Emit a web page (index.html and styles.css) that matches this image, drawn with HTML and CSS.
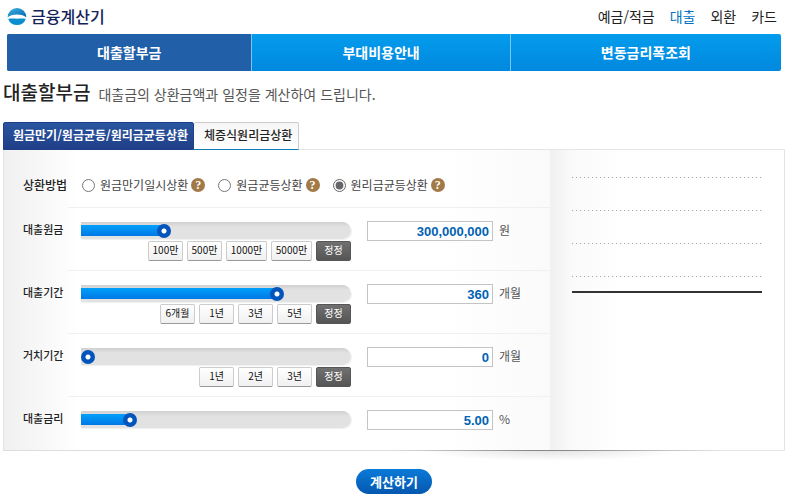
FILE: index.html
```html
<!DOCTYPE html>
<html lang="ko">
<head>
  <meta charset="UTF-8">
  <meta name="viewport" content="width=device-width, initial-scale=1">
  <title>금융계산기</title>
  <link rel="stylesheet" href="styles.css">
</head>
<body>

  <header class="header">
    <a href="#" class="logo">
      <svg width="20" height="20" viewBox="0 0 20 20" aria-hidden="true">
        <defs>
          <linearGradient id="sky" x1="0" y1="0" x2="1" y2="1">
            <stop offset="0" stop-color="#3fb4e0"/>
            <stop offset="1" stop-color="#0065b3"/>
          </linearGradient>
        </defs>
        <path d="M0.6 11.5A9.4 9.4 0 1 1 19.4 11.5C17.5 9.6 14 8.4 10 8.4S2.5 9.6 0.6 11.5Z" fill="url(#sky)"/>
        <path d="M1.2 13C4 12.2 7 12.8 10 12.8S16 12.2 18.8 13A9.4 9.4 0 0 1 1.2 13Z" fill="#0b8ed0"/>
      </svg>
      <span>금융계산기</span>
    </a>
    <nav class="menu">
      <a href="#">예금/적금</a>
      <a href="#" class="on">대출</a>
      <a href="#">외환</a>
      <a href="#">카드</a>
    </nav>
  </header>

  <nav class="nav">
    <a href="#" class="on">대출할부금</a>
    <a href="#">부대비용안내</a>
    <a href="#">변동금리폭조회</a>
  </nav>

  <div class="title">
    <h1>대출할부금</h1>
    <p>대출금의 상환금액과 일정을 계산하여 드립니다.</p>
  </div>

  <div class="tabs">
    <button type="button" class="tab on">원금만기/원금균등/원리금균등상환</button>
    <button type="button" class="tab">체증식원리금상환</button>
  </div>

  <form>
    <div class="panel">
      <div class="fields">
        <div class="row method">
          <span class="label">상환방법</span>
          <div class="cell">
            <div class="radio">
              <input type="radio" name="method" id="method1">
              <label for="method1">원금만기일시상환</label>
              <button type="button" class="help">?</button>
            </div>
            <div class="radio">
              <input type="radio" name="method" id="method2">
              <label for="method2">원금균등상환</label>
              <button type="button" class="help">?</button>
            </div>
            <div class="radio">
              <input type="radio" name="method" id="method3" checked>
              <label for="method3">원리금균등상환</label>
              <button type="button" class="help">?</button>
            </div>
          </div>
        </div>

        <div class="row">
          <label class="label" for="amount">대출원금</label>
          <div class="cell">
            <div class="control">
              <div class="track"><input type="range" aria-label="대출원금" min="0" max="1000000000" value="300000000" style="--fill: 30%"></div>
              <div class="steps">
                <button type="button">100만</button>
                <button type="button">500만</button>
                <button type="button" class="wide">1000만</button>
                <button type="button" class="wide">5000만</button>
                <button type="button" class="reset">정정</button>
              </div>
            </div>
            <input type="text" class="value" id="amount" value="300,000,000">
            <span class="unit">원</span>
          </div>
        </div>

        <div class="row">
          <label class="label" for="period">대출기간</label>
          <div class="cell">
            <div class="control">
              <div class="track"><input type="range" aria-label="대출기간" min="0" max="480" value="360" style="--fill: 75%"></div>
              <div class="steps">
                <button type="button">6개월</button>
                <button type="button">1년</button>
                <button type="button">3년</button>
                <button type="button">5년</button>
                <button type="button" class="reset">정정</button>
              </div>
            </div>
            <input type="text" class="value" id="period" value="360">
            <span class="unit">개월</span>
          </div>
        </div>

        <div class="row">
          <label class="label" for="grace">거치기간</label>
          <div class="cell">
            <div class="control">
              <div class="track"><input type="range" aria-label="거치기간" min="0" max="120" value="0" style="--fill: 0%"></div>
              <div class="steps">
                <button type="button">1년</button>
                <button type="button">2년</button>
                <button type="button">3년</button>
                <button type="button" class="reset">정정</button>
              </div>
            </div>
            <input type="text" class="value" id="grace" value="0">
            <span class="unit">개월</span>
          </div>
        </div>

        <div class="row">
          <label class="label" for="rate">대출금리</label>
          <div class="cell">
            <div class="control">
              <div class="track"><input type="range" aria-label="대출금리" min="0" max="30" value="5" style="--fill: 17%"></div>
            </div>
            <input type="text" class="value" id="rate" value="5.00">
            <span class="unit">%</span>
          </div>
        </div>
      </div>

      <div class="result">
        <ul>
          <li></li>
          <li></li>
          <li></li>
          <li></li>
        </ul>
      </div>
    </div>
    <div class="shadow"></div>

    <div class="submit">
      <button type="submit">계산하기</button>
    </div>
  </form>

</body>
</html>
```

FILE: styles.css
```css
* {
  box-sizing: border-box;
}

body {
  margin: 0;
  padding: 0 15px 0 3px;
  background: #fff;
  color: #333;
  font-family: "Noto Sans CJK KR", "Noto Sans", sans-serif;
  font-size: 12px;
  line-height: 18px;
}

a {
  color: inherit;
  text-decoration: none;
}

button, input {
  margin: 0;
  font-family: inherit;
}

button {
  padding: 0;
  border: 0;
  cursor: pointer;
}

/* header */
.header {
  display: flex;
  justify-content: space-between;
  align-items: center;
  height: 34px;
  padding: 0 8px 2px 4px;
}

.logo {
  display: flex;
  align-items: center;
  gap: 4px;
  color: #14235a;
  font-size: 16px;
  font-weight: 500;
}

.menu {
  display: flex;
  gap: 15px;
  color: #222;
  font-size: 14px;
}

.menu .on {
  color: #0070c0;
}

.nav {
  display: flex;
  margin: 0 4px;
  border-radius: 2px;
  overflow: hidden;
  background: linear-gradient(#049cec, #0088df);
}

.nav a {
  flex: 1 1 auto;
  color: #fff;
  font-size: 14px;
  font-weight: bold;
  line-height: 37px;
  text-align: center;
}

.nav a + a {
  border-left: 1px solid #7cc6f2;
}

.nav .on {
  background: #2160a8;
}

.title {
  display: flex;
  align-items: baseline;
  gap: 8px;
  padding: 9px 0 18px;
}

.title h1 {
  margin: 0;
  color: #222;
  font-size: 19px;
  font-weight: 500;
  line-height: 24px;
}

.title p {
  margin: 0;
  color: #555;
  font-size: 14px;
}

/* tabs */
.tabs {
  display: flex;
  position: relative;
}

.tab {
  height: 28px;
  padding: 0 6px 3px 10px;
  border: 1px solid #ccc;
  border-left: 0;
  border-bottom-color: #0b7bb5;
  border-radius: 2px 2px 0 0;
  background: linear-gradient(#f6f6f6, #fff);
  color: #222;
  font-size: 12px;
  font-weight: 500;
}

.tab.on {
  padding: 0 5px 3px 9px;
  border: 1px solid #1f3f86;
  background: linear-gradient(#2a55a0, #1f3f88);
  color: #fff;
  font-weight: bold;
}

/* panel */
.panel {
  display: flex;
  margin-top: -1px;
  border: 1px solid #e4e4e4;
  border-bottom: 0;
}

.fields {
  flex: 1;
  padding-bottom: 1px;
  background: linear-gradient(to right, #f0f0f0, #fff 74px, #fff 440px, #fafafa);
}

.row {
  display: flex;
  height: 63px;
  padding-left: 19px;
}

.label {
  width: 45px;
  padding-top: 12px;
  color: #222;
  font-size: 11px;
  font-weight: 500;
  white-space: nowrap;
}

.cell {
  flex: 1;
  display: flex;
  align-items: flex-start;
  padding: 14px 0 0 13px;
  border-bottom: 1px solid #f0f0f0;
}

.row:last-child {
  height: 52px;
}

.row:last-child .cell {
  border-bottom: 0;
}

.row.method {
  height: 58px;
}

.method .label {
  padding-top: 26px;
  font-size: 12px;
}

.method .cell {
  gap: 12px;
  padding-top: 26px;
}

.radio {
  display: flex;
  align-items: center;
  color: #444;
}

.radio input {
  width: 13px;
  height: 13px;
  margin: 0 5px 0 1px;
  accent-color: #666;
}

.help {
  width: 14px;
  height: 14px;
  margin-left: 3px;
  border-radius: 50%;
  background: #a17a48;
  color: #fff;
  font: bold 12px/14px "Liberation Serif", serif;
}

.control {
  width: 270px;
  margin-right: 16px;
}

.track {
  height: 17px;
  padding-right: 4px;
  border-radius: 0 9px 9px 0;
  background: linear-gradient(#d0d0d0, #e2e2e2 5px, #e2e2e2);
  box-shadow: 1px 1px 1px #f0f0f0;
}

.track input {
  display: block;
  width: 100%;
  height: 17px;
  -webkit-appearance: none;
  appearance: none;
  background: linear-gradient(#00a0fa, #0078e6) 0 3px / var(--fill) 11px no-repeat;
}

.track input::-webkit-slider-thumb {
  -webkit-appearance: none;
  width: 14px;
  height: 14px;
  border-radius: 50%;
  background: radial-gradient(circle, #fff 2px, #0354bb 3px);
}

.steps {
  display: flex;
  justify-content: flex-end;
  gap: 4px;
  margin-top: 2px;
}

.steps button {
  width: 35px;
  height: 20px;
  padding-bottom: 2px;
  border: 1px solid #ccc;
  border-bottom-color: #999;
  border-radius: 2px;
  background: linear-gradient(#fff, #f0f0f0);
  color: #111;
  font-size: 10px;
  line-height: 16px;
}

.steps .wide {
  width: 41px;
}

.steps .reset {
  border-color: #555;
  background: linear-gradient(#707070, #555);
  color: #fff;
}

.value {
  width: 126px;
  height: 20px;
  margin-top: -1px;
  padding: 0 3px;
  border: 1px solid #c4c4c4;
  background: #fff;
  color: #0062b4;
  font: bold 13px "Liberation Sans", sans-serif;
  text-align: right;
}

.unit {
  margin: -1px 0 0 6px;
  color: #555;
}

.result {
  width: 30%;
  padding: 0 22px;
  background: linear-gradient(to right, #f0f0f0, #fafafa 22px, #fff 68px);
}

.result ul {
  margin: 0;
  padding: 0 0 14px;
  border-bottom: 2px solid #333;
  list-style: none;
}

.result li {
  height: 33px;
  background: repeating-linear-gradient(to right, #aaa 0 1px, #eee 1px 2px, transparent 2px 4px) bottom / 100% 1px no-repeat;
}

.result li:first-child {
  height: 28px;
}

/* bottom edge of the panel with the fold shadow */
.shadow {
  height: 19px;
  background:
    linear-gradient(to right, #ddd 50%, #888 67%, #888 72%, #e4e4e4 92%) top / 100% 1px no-repeat,
    radial-gradient(130px 11px at 70% 0, #e2e2e2, #fff) no-repeat;
}

.submit {
  padding-left: 353px;
}

.submit button {
  width: 76px;
  height: 25px;
  border-radius: 13px;
  background: linear-gradient(#0a7ad8, #0557b0);
  color: #fff;
  font-size: 13px;
  font-weight: bold;
}
```
